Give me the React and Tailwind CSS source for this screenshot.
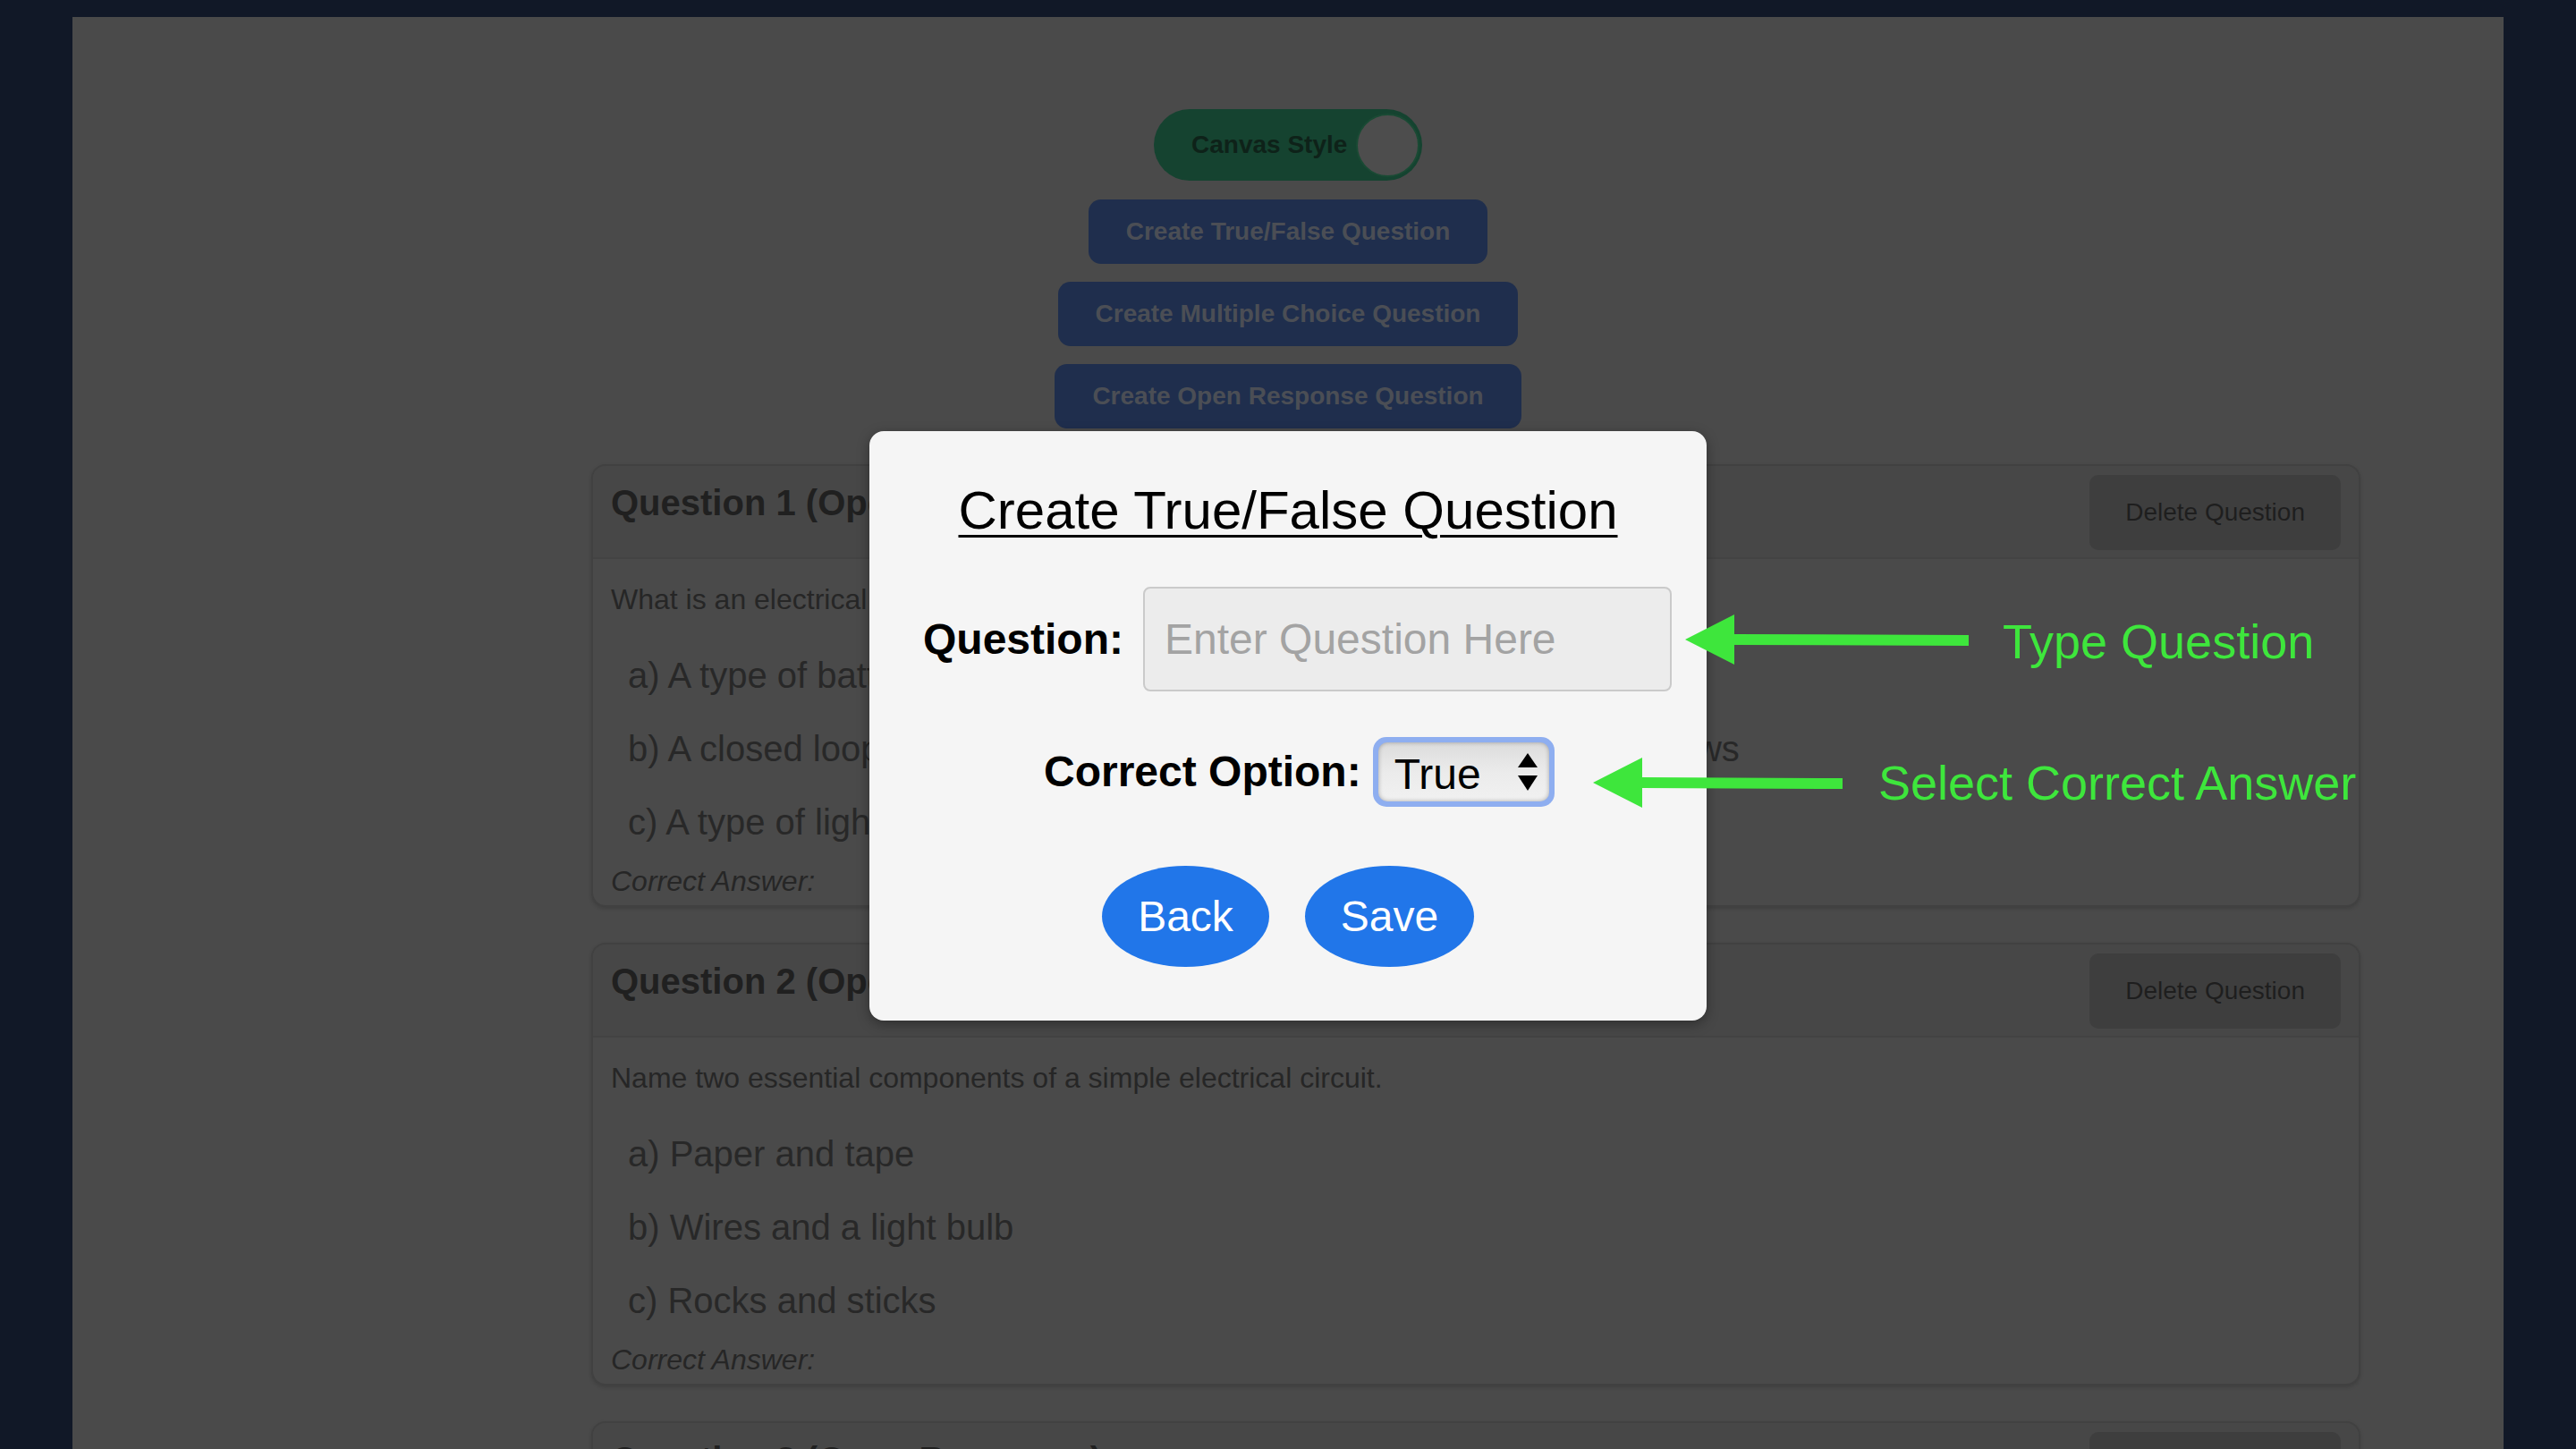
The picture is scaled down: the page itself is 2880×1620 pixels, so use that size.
import React, { useState } from "react";

const cards = [
  {
    title: "Question 1 (Open Response)",
    text: "What is an electrical circuit?",
    options: [
      "a) A type of battery",
      "b) A closed loop of conductive materials through which electricity flows",
      "c) A type of light bulb",
    ],
  },
  {
    title: "Question 2 (Open Response)",
    text: "Name two essential components of a simple electrical circuit.",
    options: [
      "a) Paper and tape",
      "b) Wires and a light bulb",
      "c) Rocks and sticks",
    ],
  },
  {
    title: "Question 3 (Open Response)",
    text: "Why does a light bulb turn on when a circuit is closed?",
    options: [
      "a) Electricity flows through it",
      "b) It gets warm",
      "c) It is magic",
    ],
  },
];

const QuestionCard = ({ card }) => (
  <div className="rounded-[16px] border-2 border-[#414141] bg-[#4a4a4a] shadow-[0_2px_4px_rgba(0,0,0,0.15)] overflow-hidden">
    {/* Card header */}
    <div className="flex items-start justify-between h-[104px] bg-[#474747] border-b-2 border-[#434343] px-[20px]">
      <h3 className="mt-[18px] text-[40px] leading-[46px] font-bold text-[#202020]">
        {card.title}
      </h3>
      <button className="mt-[10px] h-[84px] px-[40px] rounded-[10px] bg-[#3e3e3e] text-[28px] text-[#1e1e1e]">
        Delete Question
      </button>
    </div>

    {/* Card body */}
    <div className="px-[20px] pt-[25px] pb-[8px]">
      <p className="text-[32px] leading-[40px] text-[#262626]">{card.text}</p>
      <div className="mt-[42px] ml-[19px] flex flex-col gap-[36px]">
        {card.options.map((opt) => (
          <div key={opt} className="text-[40px] leading-[46px] whitespace-nowrap text-[#282828]">
            {opt}
          </div>
        ))}
      </div>
      <p className="mt-[25px] text-[32px] leading-[37px] italic text-[#262626]">
        Correct Answer:
      </p>
    </div>
  </div>
);

const Arrow = ({ width }) => (
  <svg width={width} height="60" viewBox={`0 0 ${width} 60`}>
    <polygon
      points={`4,30 59,2 59,24 ${width - 4},25 ${width - 4},37 59,36 59,58`}
      fill="#3ee63c"
    />
  </svg>
);

const App = () => {
  const [question, setQuestion] = useState("");
  const [answer, setAnswer] = useState("True");

  return (
    <div className="min-h-screen bg-[#111827] px-[81px] pt-[19px] font-['Liberation_Sans',Arial,sans-serif]">
      <div className="relative min-h-[1700px] bg-[#4a4a4a] pb-[40px]">
        {/* Top controls */}
        <div className="flex flex-col items-center pt-[103px]">
          <div className="flex items-center w-[300px] h-[80px] rounded-full bg-[#154330]">
            <span className="pl-[42px] text-[28px] font-bold text-[#0e2219]">
              Canvas Style
            </span>
            <span className="ml-auto mr-[3px] w-[71px] h-[71px] rounded-full bg-[#4d4d4d] border-2 border-[#1a4a34]"></span>
          </div>
          <div className="mt-[21px] flex flex-col items-center gap-[20px]">
            {[
              "Create True/False Question",
              "Create Multiple Choice Question",
              "Create Open Response Question",
            ].map((label) => (
              <button
                key={label}
                className="h-[72px] px-[42px] rounded-[14px] bg-[#1f2e4d] text-[28px] font-bold text-[#4b4e55]"
              >
                {label}
              </button>
            ))}
          </div>
        </div>

        {/* Question list */}
        <div className="ml-[580px] mr-[160px] mt-[40px] flex flex-col gap-[40px]">
          {cards.map((card) => (
            <QuestionCard key={card.title} card={card} />
          ))}
        </div>

        {/* Modal */}
        <div className="absolute left-[891px] top-[463px] w-[936px] rounded-[16px] bg-[#f5f5f5] shadow-[0_4px_14px_rgba(0,0,0,0.35)] pt-[55px] pb-[60px]">
          <h2 className="text-center text-[60px] leading-[67px] text-black underline decoration-[3px] underline-offset-[7px]">
            Create True/False Question
          </h2>

          <div className="mt-[52px] flex items-center pl-[60px]">
            <label className="text-[48px] font-bold text-black">Question:</label>
            <input
              value={question}
              onChange={(e) => setQuestion(e.target.value)}
              placeholder="Enter Question Here"
              className="ml-[22px] w-[591px] h-[117px] rounded-[8px] border-2 border-[#cacaca] bg-[#ececec] px-[22px] text-[48px] text-black placeholder:text-[#a3a3a3] outline-none"
            />
          </div>

          <div className="mt-[51px] flex items-center pl-[195px]">
            <label className="text-[48px] font-bold text-black">Correct Option:</label>
            <div className="relative ml-[13px] w-[203px] h-[78px] rounded-[15px] bg-[#8eaef0] p-[6px]">
              <select
                value={answer}
                onChange={(e) => setAnswer(e.target.value)}
                className="appearance-none w-full h-full rounded-[10px] bg-gradient-to-b from-[#dcdcdc] via-[#ebebeb] to-[#f1f1f1] shadow-[inset_0_0_5px_rgba(0,0,0,0.3)] pl-[18px] text-[48px] text-black outline-none"
              >
                <option>True</option>
                <option>False</option>
              </select>
              <svg
                className="absolute right-[19px] top-[18px] pointer-events-none"
                width="22"
                height="42"
                viewBox="0 0 22 42"
              >
                <polygon points="11,0 22,16 0,16" fill="#000" />
                <polygon points="0,25 22,25 11,42" fill="#000" />
              </svg>
            </div>
          </div>

          <div className="mt-[66px] flex justify-center gap-[40px]">
            <button className="w-[187px] h-[113px] rounded-[50%] bg-[#2176e9] text-[48px] text-white">
              Back
            </button>
            <button className="w-[189px] h-[113px] rounded-[50%] bg-[#2176e9] text-[48px] text-white">
              Save
            </button>
          </div>
        </div>

        {/* Annotations */}
        <div className="absolute left-[1799px] top-[666px]">
          <Arrow width={325} />
        </div>
        <div className="absolute left-[2158px] top-[671px] text-[54px] leading-none text-[#3ee63c] whitespace-nowrap">
          Type Question
        </div>
        <div className="absolute left-[1696px] top-[826px]">
          <Arrow width={287} />
        </div>
        <div className="absolute left-[2019px] top-[829px] text-[54px] leading-none text-[#3ee63c] whitespace-nowrap">
          Select Correct Answer
        </div>
      </div>
    </div>
  );
};

export default App;
